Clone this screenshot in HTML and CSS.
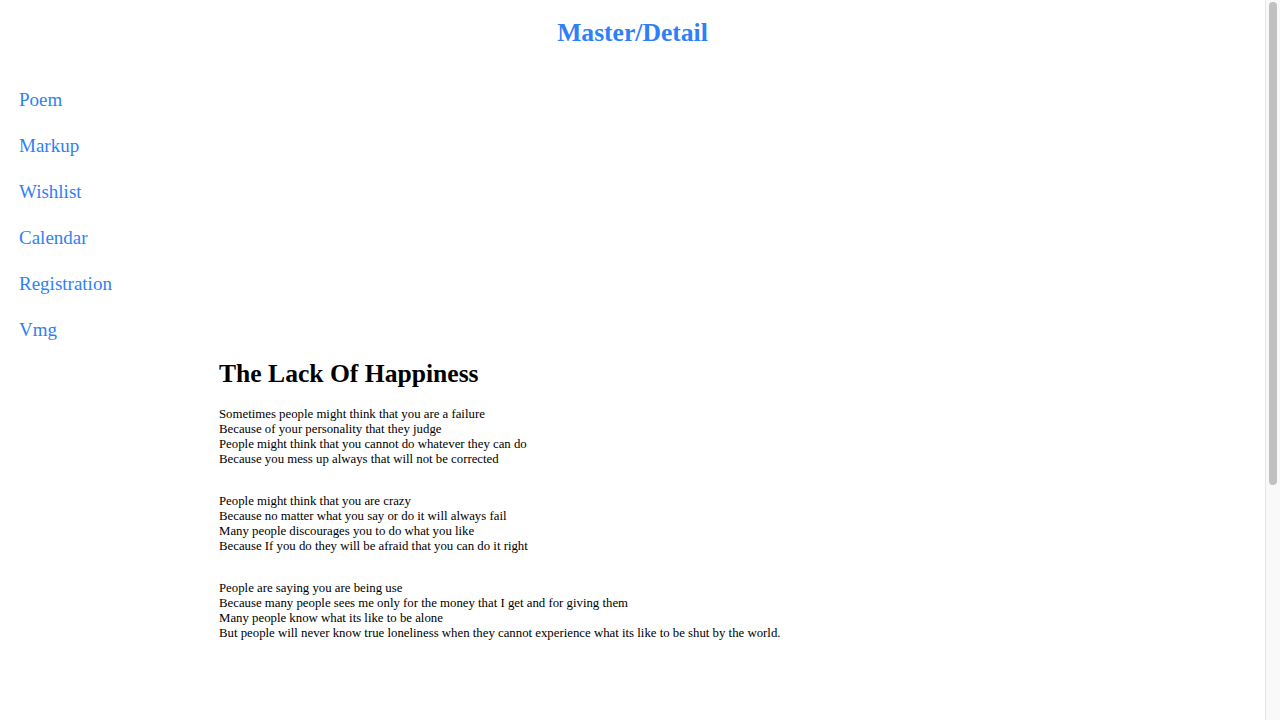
FILE: index.html
```html
<!DOCTYPE html>
<html lang="en">
<head>
<meta charset="utf-8">
<title>Master/Detail</title>
<link rel="stylesheet" href="styles.css">
</head>
<body>
<div class="window">
  <div class="page">
    <header class="header">
      <h1 class="title">Master/Detail</h1>
    </header>
    <nav class="master">
      <a class="master-link" href="#">Poem</a>
      <a class="master-link" href="#">Markup</a>
      <a class="master-link" href="#">Wishlist</a>
      <a class="master-link" href="#">Calendar</a>
      <a class="master-link" href="#">Registration</a>
      <a class="master-link" href="#">Vmg</a>
    </nav>
    <main class="detail">
      <h2 class="poem-title">The Lack Of Happiness</h2>
      <p class="stanza">Sometimes people might think that you are a failure<br>Because of your personality that they judge<br>People might think that you cannot do whatever they can do<br>Because you mess up always that will not be corrected</p>
      <p class="stanza">People might think that you are crazy<br>Because no matter what you say or do it will always fail<br>Many people discourages you to do what you like<br>Because If you do they will be afraid that you can do it right</p>
      <p class="stanza">People are saying you are being use<br>Because many people sees me only for the money that I get and for giving them<br>Many people know what its like to be alone<br>But people will never know true loneliness when they cannot experience what its like to be shut by the world.</p>
    </main>
  </div>
  <div class="scrollbar" aria-hidden="true">
    <div class="scrollbar-thumb"></div>
  </div>
</div>
</body>
</html>
```
FILE: styles.css
```css
html, body {
  margin: 0;
  padding: 0;
  background: #ffffff;
  overflow: hidden;
}
body {
  font-family: "Liberation Serif", "Times New Roman", serif;
  color: #000000;
}
.window {
  display: flex;
  height: 720px;
}
.page {
  flex: 1;
  min-width: 0;
}
.header {
  display: flex;
  justify-content: center;
  padding-top: 18px;
}
.title {
  margin: 0;
  font-size: 25.6px;
  line-height: 30px;
  font-weight: bold;
  color: #2f7ff7;
}
.master {
  display: flex;
  flex-direction: column;
  align-items: flex-start;
  gap: 23px;
  padding: 40px 0 0 19px;
}
.master-link {
  font-size: 19px;
  line-height: 23px;
  color: #2f7ff7;
  text-decoration: none;
}
.detail {
  padding: 18px 0 0 219px;
}
.poem-title {
  margin: 0 0 18px;
  font-size: 25.6px;
  line-height: 30px;
  font-weight: bold;
}
.stanza {
  margin: 0 0 27px;
  font-size: 12.8px;
  line-height: 15px;
}
.scrollbar {
  width: 8px;
  flex: none;
  background: #f9f9f9;
  border-left: 1px solid #e6e6e6;
  padding: 2px 3px 0 3px;
  display: flex;
  flex-direction: column;
}
.scrollbar-thumb {
  height: 483px;
  background: #c1c1c1;
  border-radius: 4px;
}
```
